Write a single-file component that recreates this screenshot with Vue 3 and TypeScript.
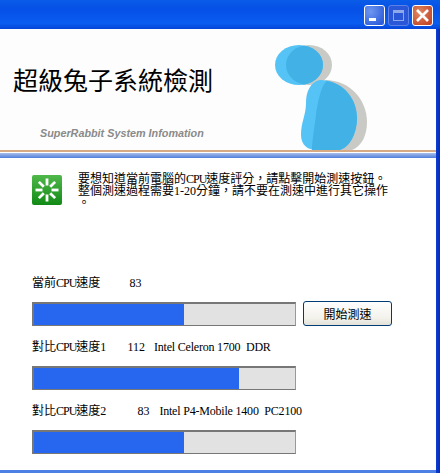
<script setup lang="ts">
interface SpeedRow {
  before: string;
  after: string;
  value: number;
  valueGap: number;
  detail: string;
  detailGap: number;
  percent: number;
}

const rows: SpeedRow[] = [
  { before: '當前', after: '速度', value: 83, valueGap: 29, detail: '', detailGap: 0, percent: 57.6 },
  { before: '對比', after: '速度1', value: 112, valueGap: 21, detail: 'Intel Celeron 1700  DDR', detailGap: 9, percent: 78.5 },
  { before: '對比', after: '速度2', value: 83, valueGap: 31, detail: 'Intel P4-Mobile 1400  PC2100', detailGap: 10, percent: 57.6 }
];

const rays = [0, 45, 90, 135, 180, 225, 270, 315];
</script>

<template>
  <div class="window">
    <div class="titlebar">
      <div class="win-btn minimize"><span class="dash"></span></div>
      <div class="win-btn maximize"><span class="box"></span></div>
      <div class="win-btn close">
        <svg width="15" height="15" viewBox="0 0 15 15">
          <path d="M2 2 L13 13 M13 2 L2 13" stroke="#fff" stroke-width="2.6" fill="none" />
        </svg>
      </div>
    </div>
    <div class="frame">
      <div class="content">
        <div class="header">
          <div class="brand">
            <div class="title">超級兔子系統檢測</div>
            <div class="subtitle">SuperRabbit System Infomation</div>
          </div>
          <svg class="logo" width="100" height="108" viewBox="275 42 100 108">
            <defs>
              <clipPath id="head-shadow">
                <ellipse cx="309" cy="65" rx="23" ry="20" />
              </clipPath>
            </defs>
            <ellipse cx="309" cy="65" rx="23" ry="20" fill="#c9c9c5" />
            <ellipse cx="299" cy="65" rx="24" ry="20" fill="#55c3f5" />
            <ellipse cx="299" cy="65" rx="24" ry="20" fill="#41b1e6" clip-path="url(#head-shadow)" />
            <path d="M325 80 C350 80 367 100 367 122 C367 135 362 146 352 150 L320 150 Z" fill="#c9c9c5" />
            <path d="M320 80 C310 82 306 92 306 103 C306 115 301 122 301 135 C301 145 308 150 316 150 L340 150 C352 146 357 130 357 118 C357 98 342 80 320 80 Z" fill="#55c3f5" />
            <path d="M327 81 C322 84 318 100 316 115 C314 130 312 142 312 150 L340 150 C352 146 357 130 357 118 C357 100 345 84 327 81 Z" fill="#41b1e6" />
          </svg>
        </div>
        <div class="rule-tan"></div>
        <div class="rule-blue"></div>

        <div class="info">
          <svg class="info-icon" width="30" height="30" viewBox="0 0 30 30">
            <defs>
              <linearGradient id="icon-bg" x1="0" y1="0" x2="0" y2="1">
                <stop offset="0" stop-color="#4fb84a" />
                <stop offset="1" stop-color="#128a16" />
              </linearGradient>
            </defs>
            <rect width="30" height="30" rx="2" fill="url(#icon-bg)" />
            <rect
              v-for="angle in rays"
              :key="angle"
              x="13.6"
              y="3.5"
              width="2.8"
              height="7"
              fill="#fff"
              :transform="`rotate(${angle} 15 15)`"
            />
          </svg>
          <div class="info-text">
            要想知道當前電腦的<span class="cpu">CPU</span>速度評分，請點擊開始測速按鈕。<br />
            整個測速過程需要1-20分鐘，請不要在測速中進行其它操作<br />
            。
          </div>
        </div>

        <div class="speeds">
          <div v-for="(row, i) in rows" :key="i" class="speed">
            <div class="speed-label">
              <span>{{ row.before }}<span class="cpu">CPU</span>{{ row.after }}</span>
              <span :style="{ marginLeft: row.valueGap + 'px' }">{{ row.value }}</span>
              <span v-if="row.detail" class="detail" :style="{ marginLeft: row.detailGap + 'px' }">{{ row.detail }}</span>
            </div>
            <div class="speed-line">
              <div class="bar">
                <div class="bar-fill" :style="{ width: row.percent + '%' }"></div>
              </div>
              <button v-if="i === 0" class="start" type="button">開始測速</button>
            </div>
          </div>
        </div>

        <div class="bottom"></div>
      </div>
      <div class="edge"></div>
    </div>
  </div>
</template>

<style>
html,
body {
  margin: 0;
  background: #fff;
}
</style>

<style scoped>
.window {
  width: 440px;
  height: 473px;
  display: flex;
  flex-direction: column;
  overflow: hidden;
  background: #fff;
  font-family: "Liberation Serif", "Noto Sans CJK TC", serif;
  font-size: 12px;
  color: #000;
}

.titlebar {
  height: 29px;
  flex: none;
  box-sizing: border-box;
  display: flex;
  justify-content: flex-end;
  align-items: flex-start;
  gap: 3px;
  padding: 5px 7px 0 0;
  background: linear-gradient(180deg, #0a5ce8 0, #0650e6 30%, #0a5cf0 80%, #0644d8 100%);
}

.win-btn {
  width: 21px;
  height: 21px;
  box-sizing: border-box;
  border: 1px solid #fff;
  border-radius: 3px;
  display: flex;
  align-items: center;
  justify-content: center;
}

.minimize {
  background: radial-gradient(circle at 30% 30%, #6f97f0, #2f5fdc 80%);
  align-items: flex-end;
  justify-content: flex-start;
}

.dash {
  width: 7px;
  height: 3px;
  margin: 0 0 4px 4px;
  background: #fff;
}

.maximize {
  background: #2a56d8;
  border-color: #5b80e6;
}

.box {
  width: 11px;
  height: 11px;
  box-sizing: border-box;
  border: 1px solid #8ea8ea;
  border-top-width: 3px;
}

.close {
  background: radial-gradient(circle at 35% 35%, #e08a64, #c4492a 80%);
}

.frame {
  flex: 1;
  display: flex;
  min-height: 0;
}

.content {
  flex: 1;
  display: flex;
  flex-direction: column;
}

.edge {
  width: 4px;
  flex: none;
  background: linear-gradient(90deg, #0a3ed0, #0a2ab8);
}

.header {
  height: 121px;
  flex: none;
  display: flex;
  justify-content: space-between;
  align-items: flex-end;
  padding-right: 61px;
  background: #fdfdfd;
}

.brand {
  align-self: stretch;
  padding-left: 13px;
}

.title {
  margin-top: 37px;
  font-size: 25px;
  line-height: 32px;
  white-space: nowrap;
}

.subtitle {
  margin: 29px 0 0 27px;
  font-family: "Liberation Sans", sans-serif;
  font-size: 10.8px;
  font-weight: bold;
  font-style: italic;
  line-height: 12px;
  color: #8a8a8a;
  white-space: nowrap;
}

.logo {
  display: block;
}

.rule-tan {
  height: 2px;
  background: #d9ab84;
}

.rule-blue {
  height: 5px;
  margin-top: 1px;
  background: linear-gradient(180deg, #a9bfea, #4f7fdc);
}

.info {
  display: flex;
  gap: 16px;
  padding: 17px 0 0 32px;
}

.info-icon {
  flex: none;
}

.info-text {
  margin-top: -2px;
  line-height: 12px;
  white-space: nowrap;
}

.cpu {
  letter-spacing: -1px;
}

.speeds {
  margin-top: 67px;
  padding-left: 32px;
  display: flex;
  flex-direction: column;
  gap: 14px;
}

.speed-label {
  height: 14px;
  line-height: 14px;
  margin-bottom: 12px;
  white-space: pre;
}

.detail {
  letter-spacing: -0.2px;
}

.speed-line {
  display: flex;
  align-items: flex-start;
  gap: 7px;
}

.bar {
  width: 264px;
  height: 24px;
  box-sizing: border-box;
  border: 2px solid #777;
  border-right-width: 1px;
  border-bottom-width: 1px;
  border-right-color: #999;
  background: #e2e2e2;
}

.bar-fill {
  height: 100%;
  background: #2766ee;
}

.start {
  width: 89px;
  height: 25px;
  margin-top: -1px;
  padding: 0;
  border: 1px solid #003c74;
  border-radius: 3px;
  background: linear-gradient(180deg, #fefefe, #f3f2ec 70%, #e3e1d8);
  font-family: inherit;
  font-size: 12px;
  color: #000;
}

.bottom {
  height: 3px;
  margin-top: auto;
  background: #4d80e4;
}
</style>
